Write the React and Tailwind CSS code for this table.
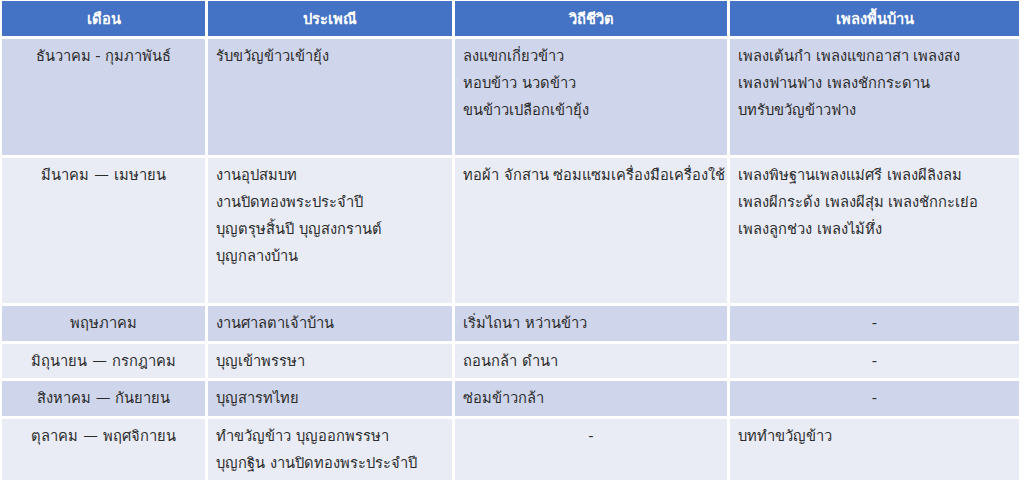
import React from "react";

const rows = [
  {
    month: "ธันวาคม - กุมภาพันธ์",
    custom: ["รับขวัญข้าวเข้ายุ้ง"],
    life: ["ลงแขกเกี่ยวข้าว", "หอบข้าว นวดข้าว", "ขนข้าวเปลือกเข้ายุ้ง"],
    song: ["เพลงเต้นกำ เพลงแขกอาสา เพลงสง", "เพลงฟานฟาง เพลงชักกระดาน", "บทรับขวัญข้าวฟาง"],
    dark: true,
  },
  {
    month: "มีนาคม — เมษายน",
    custom: ["งานอุปสมบท", "งานปิดทองพระประจำปี", "บุญตรุษสิ้นปี บุญสงกรานต์", "บุญกลางบ้าน"],
    life: ["ทอผ้า จักสาน ซ่อมแซมเครื่องมือเครื่องใช้"],
    song: ["เพลงพิษฐานเพลงแม่ศรี เพลงผีลิงลม", "เพลงผีกระด้ง เพลงผีสุ่ม เพลงชักกะเย่อ", "เพลงลูกช่วง เพลงไม้หึ่ง"],
    dark: false,
  },
  {
    month: "พฤษภาคม",
    custom: ["งานศาลตาเจ้าบ้าน"],
    life: ["เริ่มไถนา หว่านข้าว"],
    song: null,
    dark: true,
  },
  {
    month: "มิถุนายน — กรกฎาคม",
    custom: ["บุญเข้าพรรษา"],
    life: ["ถอนกล้า ดำนา"],
    song: null,
    dark: false,
  },
  {
    month: "สิงหาคม — กันยายน",
    custom: ["บุญสารทไทย"],
    life: ["ซ่อมข้าวกล้า"],
    song: null,
    dark: true,
  },
  {
    month: "ตุลาคม — พฤศจิกายน",
    custom: ["ทำขวัญข้าว บุญออกพรรษา", "บุญกฐิน งานปิดทองพระประจำปี"],
    life: null,
    song: ["บททำขวัญข้าว"],
    dark: false,
  },
];

function Lines({ items }) {
  return items.map((t) => (
    <div key={t} className="whitespace-nowrap">
      {t}
    </div>
  ));
}

export default function App() {
  return (
    <div className="w-[1024px] h-[492px] bg-white overflow-hidden pl-[2px] pt-[1px] font-['Tahoma','DejaVu_Sans',sans-serif] text-[14.7px] leading-[27px] text-[#2b2b2b]">
      <div className="grid grid-cols-[203px_244px_272px_289px] grid-rows-[35px_116px_145px_35px_34px_35px_61px] gap-[3px]">
        {/* HEADER */}
        {["เดือน", "ประเพณี", "วิถีชีวิต", "เพลงพื้นบ้าน"].map((h) => (
          <div
            key={h}
            className="bg-[#4472c4] text-white font-bold flex items-center justify-center"
          >
            {h}
          </div>
        ))}

        {rows.map((r) => {
          const bg = r.dark ? "bg-[#cfd5ea]" : "bg-[#e9ebf5]";
          return (
            <React.Fragment key={r.month}>
              <div className={`${bg} pt-[3px] text-center whitespace-nowrap`}>{r.month}</div>
              <div className={`${bg} pt-[3px] px-2`}>
                <Lines items={r.custom} />
              </div>
              <div className={`${bg} pt-[3px] px-2`}>
                {r.life ? <Lines items={r.life} /> : <div className="text-center">-</div>}
              </div>
              <div className={`${bg} pt-[3px] px-2`}>
                {r.song ? <Lines items={r.song} /> : <div className="text-center">-</div>}
              </div>
            </React.Fragment>
          );
        })}
      </div>
    </div>
  );
}
